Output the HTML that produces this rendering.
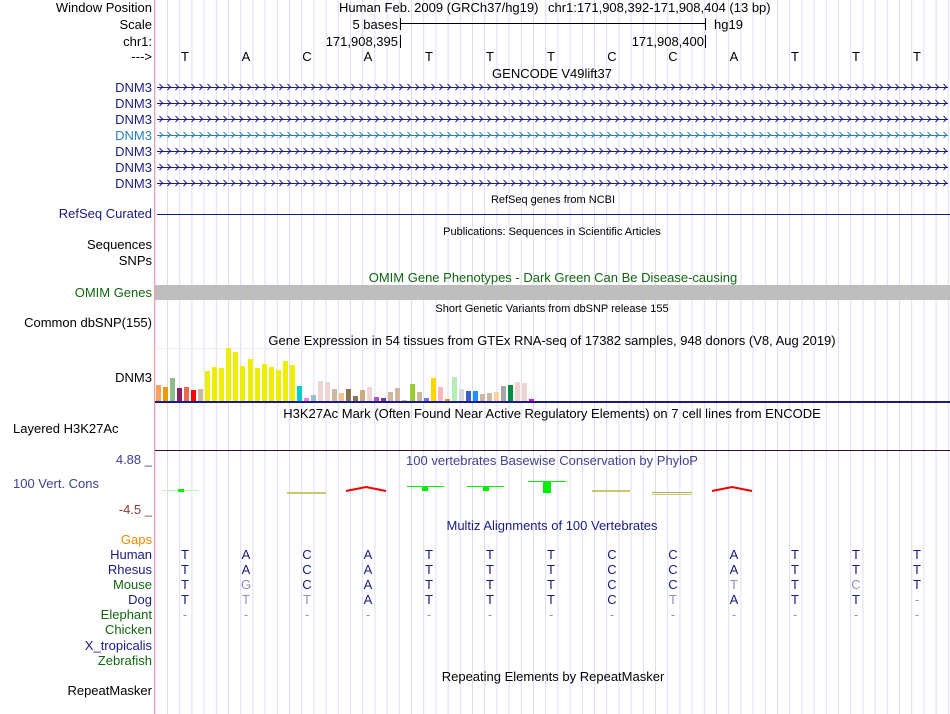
<!DOCTYPE html>
<html><head><meta charset="utf-8"><style>
html,body{margin:0;padding:0;background:#fff;}
svg{display:block;}
text{font-family:"Liberation Sans",sans-serif;font-size:13px;}
.s{font-size:11px;}
.r{text-anchor:end;}
.m{text-anchor:middle;}
</style></head><body>
<svg width="950" height="714" viewBox="0 0 950 714" xmlns="http://www.w3.org/2000/svg">
<defs>
<pattern id="grid" x="167" y="0" width="12.2" height="714" patternUnits="userSpaceOnUse">
<rect x="0" y="0" width="1" height="714" fill="#dcdcf6"/>
</pattern>
<pattern id="chev" x="157" y="79" width="8" height="16" patternUnits="userSpaceOnUse">
<path d="M2.5 5 L5.5 8 L2.5 11" fill="none" stroke="#1a1a80" stroke-width="1"/>
</pattern>
<pattern id="chev2" x="157" y="79" width="8" height="16" patternUnits="userSpaceOnUse">
<path d="M2.5 5 L5.5 8 L2.5 11" fill="none" stroke="#2a7fb8" stroke-width="1"/>
</pattern>
</defs>
<rect x="155" y="0" width="795" height="714" fill="url(#grid)"/>
<rect x="154" y="0" width="1" height="714" fill="#f4a0a0"/>

<!-- header -->
<text x="152" y="12" class="r">Window Position</text>
<text x="152" y="29" class="r">Scale</text>
<text x="152" y="46" class="r">chr1:</text>
<text x="152" y="61" class="r">---&gt;</text>
<text x="339" y="12">Human Feb. 2009 (GRCh37/hg19)</text>
<text x="548" y="12">chr1:171,908,392-171,908,404 (13 bp)</text>
<text x="398" y="29" class="r">5 bases</text>
<rect x="400" y="18" width="1" height="12" fill="#000"/>
<rect x="400" y="23" width="306" height="1" fill="#000"/>
<rect x="705" y="18" width="1" height="12" fill="#000"/>
<text x="714" y="29">hg19</text>
<text x="398" y="46" class="r">171,908,395</text>
<rect x="400" y="35" width="1" height="13" fill="#000"/>
<text x="704" y="46" class="r">171,908,400</text>
<rect x="705" y="35" width="1" height="13" fill="#000"/>
<g text-anchor="middle">
<text x="185" y="61">T</text><text x="246" y="61">A</text><text x="307" y="61">C</text><text x="368" y="61">A</text><text x="429" y="61">T</text><text x="490" y="61">T</text><text x="551" y="61">T</text><text x="612" y="61">C</text><text x="673" y="61">C</text><text x="734" y="61">A</text><text x="795" y="61">T</text><text x="856" y="61">T</text><text x="917" y="61">T</text>
</g>
<text x="552" y="78" class="m">GENCODE V49lift37</text>

<!-- genes -->
<text x="152" y="92" class="r" fill="#1a1a80">DNM3</text>
<text x="152" y="108" class="r" fill="#1a1a80">DNM3</text>
<text x="152" y="124" class="r" fill="#1a1a80">DNM3</text>
<text x="152" y="140" class="r" fill="#2a7fb8">DNM3</text>
<text x="152" y="156" class="r" fill="#1a1a80">DNM3</text>
<text x="152" y="172" class="r" fill="#1a1a80">DNM3</text>
<text x="152" y="188" class="r" fill="#1a1a80">DNM3</text>
<rect x="157" y="79" width="791" height="112" fill="url(#chev)"/>
<rect x="157" y="127" width="791" height="16" fill="#fff"/>
<rect x="155" y="127" width="795" height="16" fill="url(#grid)"/>
<rect x="157" y="127" width="791" height="16" fill="url(#chev2)"/>
<rect x="157" y="87" width="791" height="1" fill="#1a1a80"/>
<rect x="157" y="103" width="791" height="1" fill="#1a1a80"/>
<rect x="157" y="119" width="791" height="1" fill="#1a1a80"/>
<rect x="157" y="135" width="791" height="1" fill="#2a7fb8"/>
<rect x="157" y="151" width="791" height="1" fill="#1a1a80"/>
<rect x="157" y="167" width="791" height="1" fill="#1a1a80"/>
<rect x="157" y="183" width="791" height="1" fill="#1a1a80"/>

<text x="553" y="203" class="s m">RefSeq genes from NCBI</text>
<text x="152" y="218" class="r" fill="#1a1a80">RefSeq Curated</text>
<rect x="157" y="214" width="793" height="1" fill="#1a1a80"/>
<text x="552" y="235" class="s m">Publications: Sequences in Scientific Articles</text>
<text x="152" y="249" class="r">Sequences</text>
<text x="152" y="265" class="r">SNPs</text>
<text x="553" y="282" class="m" fill="#116611">OMIM Gene Phenotypes - Dark Green Can Be Disease-causing</text>
<text x="152" y="297" class="r" fill="#116611">OMIM Genes</text>
<rect x="155" y="285" width="795" height="15" fill="#bebebe"/>
<text x="552" y="312" class="s m">Short Genetic Variants from dbSNP release 155</text>
<text x="152" y="327" class="r">Common dbSNP(155)</text>

<text x="552" y="345" class="m">Gene Expression in 54 tissues from GTEx RNA-seq of 17382 samples, 948 donors (V8, Aug 2019)</text>
<text x="152" y="382" class="r">DNM3</text>
<rect x="155.5" y="348.5" width="378" height="53" fill="none" stroke="#eeeeee"/>
<g>
<rect x="156" y="385" width="5" height="16" fill="#f4a460"/>
<rect x="163" y="387" width="5" height="14" fill="#ee9a00"/>
<rect x="170" y="378" width="5" height="23" fill="#8fbc8f"/>
<rect x="177" y="388" width="5" height="13" fill="#8b1c62"/>
<rect x="184" y="387" width="5" height="14" fill="#ee6a50"/>
<rect x="191" y="390" width="5" height="11" fill="#ff0000"/>
<rect x="198" y="389" width="5" height="12" fill="#cdb79e"/>
<rect x="205" y="371" width="5" height="30" fill="#eeee00"/>
<rect x="212" y="367" width="5" height="34" fill="#eeee00"/>
<rect x="219" y="368" width="5" height="33" fill="#eeee00"/>
<rect x="226" y="348" width="5" height="53" fill="#eeee00"/>
<rect x="233" y="352" width="5" height="49" fill="#eeee00"/>
<rect x="240" y="366" width="5" height="35" fill="#eeee00"/>
<rect x="248" y="359" width="5" height="42" fill="#eeee00"/>
<rect x="255" y="368" width="5" height="33" fill="#eeee00"/>
<rect x="262" y="364" width="5" height="37" fill="#eeee00"/>
<rect x="269" y="367" width="5" height="34" fill="#eeee00"/>
<rect x="276" y="370" width="5" height="31" fill="#eeee00"/>
<rect x="283" y="361" width="5" height="40" fill="#eeee00"/>
<rect x="290" y="365" width="5" height="36" fill="#eeee00"/>
<rect x="297" y="386" width="5" height="15" fill="#00cdcd"/>
<rect x="304" y="398" width="5" height="3" fill="#ee82ee"/>
<rect x="311" y="395" width="5" height="6" fill="#9ac0cd"/>
<rect x="318" y="381" width="5" height="20" fill="#eed5d2"/>
<rect x="325" y="382" width="5" height="19" fill="#eed5d2"/>
<rect x="332" y="389" width="5" height="12" fill="#cdb79e"/>
<rect x="339" y="393" width="5" height="8" fill="#f4c28a"/>
<rect x="346" y="389" width="5" height="12" fill="#8b7355"/>
<rect x="353" y="396" width="5" height="5" fill="#8b7355"/>
<rect x="360" y="390" width="5" height="11" fill="#cdaa7d"/>
<rect x="367" y="387" width="5" height="14" fill="#eed5d2"/>
<rect x="374" y="397" width="5" height="4" fill="#b452cd"/>
<rect x="381" y="398" width="5" height="3" fill="#7a378b"/>
<rect x="388" y="392" width="5" height="9" fill="#cdb79e"/>
<rect x="395" y="388" width="5" height="13" fill="#cdb79e"/>
<rect x="402" y="400" width="5" height="1" fill="#cdb79e"/>
<rect x="410" y="384" width="5" height="17" fill="#9acd32"/>
<rect x="417" y="392" width="5" height="9" fill="#cdb79e"/>
<rect x="424" y="398" width="5" height="3" fill="#7171ee"/>
<rect x="431" y="378" width="5" height="23" fill="#ffd700"/>
<rect x="438" y="387" width="5" height="14" fill="#ffb6c1"/>
<rect x="445" y="399" width="5" height="2" fill="#cd9b1d"/>
<rect x="452" y="377" width="5" height="24" fill="#b4eeb4"/>
<rect x="459" y="389" width="5" height="12" fill="#d9d9d9"/>
<rect x="466" y="391" width="5" height="10" fill="#3a5fcd"/>
<rect x="473" y="391" width="5" height="10" fill="#1e90ff"/>
<rect x="480" y="394" width="5" height="7" fill="#cdb79e"/>
<rect x="487" y="393" width="5" height="8" fill="#cdb79e"/>
<rect x="494" y="392" width="5" height="9" fill="#ffd39b"/>
<rect x="501" y="386" width="5" height="15" fill="#a6a6a6"/>
<rect x="508" y="385" width="5" height="16" fill="#008b45"/>
<rect x="515" y="382" width="5" height="19" fill="#eed5d2"/>
<rect x="522" y="383" width="5" height="18" fill="#eed5d2"/>
<rect x="529" y="399" width="5" height="2" fill="#ee00ee"/>
</g>
<rect x="155" y="401" width="795" height="2" fill="#1a1a80"/>

<text x="552" y="418" class="m">H3K27Ac Mark (Often Found Near Active Regulatory Elements) on 7 cell lines from ENCODE</text>
<text x="13" y="433">Layered H3K27Ac</text>
<rect x="155" y="450" width="795" height="1" fill="#3a1020"/>

<text x="152" y="464" class="r" fill="#404090">4.88 _</text>
<text x="552" y="465" class="m" fill="#404090">100 vertebrates Basewise Conservation by PhyloP</text>
<text x="13" y="488" fill="#404090">100 Vert. Cons</text>
<text x="152" y="514" class="r" fill="#8b3a3a">-4.5 _</text>
<g>
<rect x="162" y="490" width="37" height="1" fill="#b8f8b8"/><rect x="178" y="489" width="6" height="3" fill="#00ee00"/>
<rect x="287" y="492" width="39" height="2" fill="#c8c870"/>
<path d="M346 491 L366 487 L386 491" fill="none" stroke="#ee0000" stroke-width="2"/>
<rect x="407" y="486" width="37" height="1" fill="#00ee00"/><rect x="422" y="486" width="6" height="5" fill="#00ee00"/>
<rect x="467" y="486" width="37" height="1" fill="#00ee00"/><rect x="483" y="486" width="6" height="5" fill="#00ee00"/>
<rect x="528" y="481" width="38" height="1" fill="#00ee00"/><rect x="543" y="481" width="8" height="12" fill="#00ee00"/>
<rect x="592" y="490" width="38" height="2" fill="#c8c870"/>
<rect x="652" y="492" width="40" height="1" fill="#b0b050"/><rect x="652" y="494" width="40" height="1" fill="#c8c870"/>
<path d="M712 491 L732 487 L752 491" fill="none" stroke="#ee0000" stroke-width="2"/>
</g>

<text x="552" y="530" class="m" fill="#1a1a80">Multiz Alignments of 100 Vertebrates</text>
<text x="152" y="544" class="r" fill="#ee8a00">Gaps</text>
<text x="152" y="559" class="r" fill="#1a1a80">Human</text>
<text x="152" y="574" class="r" fill="#1a1a80">Rhesus</text>
<text x="152" y="589" class="r" fill="#116611">Mouse</text>
<text x="152" y="604" class="r" fill="#1a1a80">Dog</text>
<text x="152" y="619" class="r" fill="#116611">Elephant</text>
<text x="152" y="634" class="r" fill="#116611">Chicken</text>
<text x="152" y="650" class="r" fill="#1a1a80">X_tropicalis</text>
<text x="152" y="665" class="r" fill="#116611">Zebrafish</text>
<g fill="#1a1a80" text-anchor="middle">
<text x="185" y="559">T</text><text x="246" y="559">A</text><text x="307" y="559">C</text><text x="368" y="559">A</text><text x="429" y="559">T</text><text x="490" y="559">T</text><text x="551" y="559">T</text><text x="612" y="559">C</text><text x="673" y="559">C</text><text x="734" y="559">A</text><text x="795" y="559">T</text><text x="856" y="559">T</text><text x="917" y="559">T</text>
<text x="185" y="574">T</text><text x="246" y="574">A</text><text x="307" y="574">C</text><text x="368" y="574">A</text><text x="429" y="574">T</text><text x="490" y="574">T</text><text x="551" y="574">T</text><text x="612" y="574">C</text><text x="673" y="574">C</text><text x="734" y="574">A</text><text x="795" y="574">T</text><text x="856" y="574">T</text><text x="917" y="574">T</text>
<text x="185" y="589">T</text><text x="246" y="589" fill="#9090b8">G</text><text x="307" y="589">C</text><text x="368" y="589">A</text><text x="429" y="589">T</text><text x="490" y="589">T</text><text x="551" y="589">T</text><text x="612" y="589">C</text><text x="673" y="589">C</text><text x="734" y="589" fill="#9090b8">T</text><text x="795" y="589">T</text><text x="856" y="589" fill="#9090b8">C</text><text x="917" y="589">T</text>
<text x="185" y="604">T</text><text x="246" y="604" fill="#9090b8">T</text><text x="307" y="604" fill="#9090b8">T</text><text x="368" y="604">A</text><text x="429" y="604">T</text><text x="490" y="604">T</text><text x="551" y="604">T</text><text x="612" y="604">C</text><text x="673" y="604" fill="#9090b8">T</text><text x="734" y="604">A</text><text x="795" y="604">T</text><text x="856" y="604">T</text><text x="917" y="604" fill="#9090b8">-</text>
<g fill="#9090b8">
<text x="185" y="619">-</text><text x="246" y="619">-</text><text x="307" y="619">-</text><text x="368" y="619">-</text><text x="429" y="619">-</text><text x="490" y="619">-</text><text x="551" y="619">-</text><text x="612" y="619">-</text><text x="673" y="619">-</text><text x="734" y="619">-</text><text x="795" y="619">-</text><text x="856" y="619">-</text><text x="917" y="619">-</text>
</g>
</g>

<text x="553" y="681" class="m">Repeating Elements by RepeatMasker</text>
<text x="152" y="695" class="r">RepeatMasker</text>
</svg>
</body></html>
